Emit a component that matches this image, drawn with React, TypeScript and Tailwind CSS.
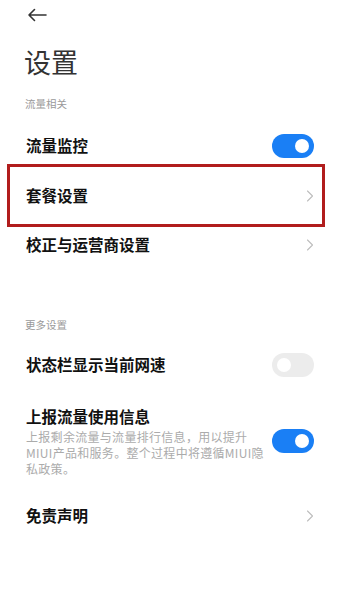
import React from 'react';

const font = { fontFamily: '"Noto Sans CJK SC", "Noto Sans", sans-serif' };

function Toggle({ on }: { on: boolean }) {
  return (
    <div
      className={`flex h-[24px] w-[42px] shrink-0 items-center rounded-full px-[5px] ${
        on ? 'justify-end bg-[#1a7ff5]' : 'justify-start bg-[#ececec]'
      }`}
    >
      <div className="h-[14px] w-[14px] rounded-full bg-white" />
    </div>
  );
}

function Chevron() {
  return (
    <svg width="8" height="12" viewBox="0 0 8 12" className="shrink-0">
      <path d="M1.5 1 L6.5 6 L1.5 11" fill="none" stroke="#bdbdbd" strokeWidth="1.1" strokeLinecap="round" strokeLinejoin="round" />
    </svg>
  );
}

export default function App() {
  return (
    <div className="min-h-screen w-[339px] bg-white" style={font}>
      {/* Back */}
      <div className="flex h-[30px] items-center pl-[27px]">
        <svg width="20" height="14" viewBox="0 0 20 14">
          <path d="M19 7 H2 M7.5 1.5 L2 7 L7.5 12.5" fill="none" stroke="#333" strokeWidth="1.6" strokeLinecap="round" strokeLinejoin="round" />
        </svg>
      </div>

      {/* Title */}
      <h1 className="mt-[14px] pl-[24px] text-[27px] font-normal leading-[36px] text-[#333]">设置</h1>

      {/* Section 1 */}
      <div className="mt-[16px] pl-[25px] text-[10.5px] leading-[16px] text-[#9a9a9a]">流量相关</div>

      <div className="mt-[16px] flex h-[36px] items-center justify-between pl-[26px] pr-[25px]">
        <span className="text-[15.5px] font-semibold text-[#111]">流量监控</span>
        <Toggle on />
      </div>

      <div className="ml-[7px] mr-[14px] flex h-[63px] items-center justify-between border-[3px] border-[#b11d1d] pl-[16px] pr-[8px]">
        <span className="text-[15.5px] font-semibold text-[#111]">套餐设置</span>
        <Chevron />
      </div>

      <div className="flex h-[36px] items-center justify-between pl-[26px] pr-[25px]">
        <span className="text-[15.5px] font-semibold text-[#111]">校正与运营商设置</span>
        <Chevron />
      </div>

      {/* Section 2 */}
      <div className="mt-[54px] pl-[25px] text-[10.5px] leading-[16px] text-[#9a9a9a]">更多设置</div>

      <div className="mt-[14px] flex h-[36px] items-center justify-between pl-[26px] pr-[25px]">
        <span className="text-[15.5px] font-semibold text-[#111]">状态栏显示当前网速</span>
        <Toggle on={false} />
      </div>

      <div className="mt-[22px] flex items-center justify-between pl-[26px] pr-[25px]">
        <div className="w-[240px]">
          <div className="text-[15.5px] font-semibold leading-[22px] text-[#111]">上报流量使用信息</div>
          <p className="mt-[2px] text-[12px] leading-[16px] tracking-[0.3px] text-[#ababab]">
            上报剩余流量与流量排行信息，用以提升MIUI产品和服务。整个过程中将遵循MIUI隐私政策。
          </p>
        </div>
        <Toggle on />
      </div>

      <div className="mt-[21px] flex h-[36px] items-center justify-between pl-[26px] pr-[25px]">
        <span className="text-[15.5px] font-semibold text-[#111]">免责声明</span>
        <Chevron />
      </div>
    </div>
  );
}
